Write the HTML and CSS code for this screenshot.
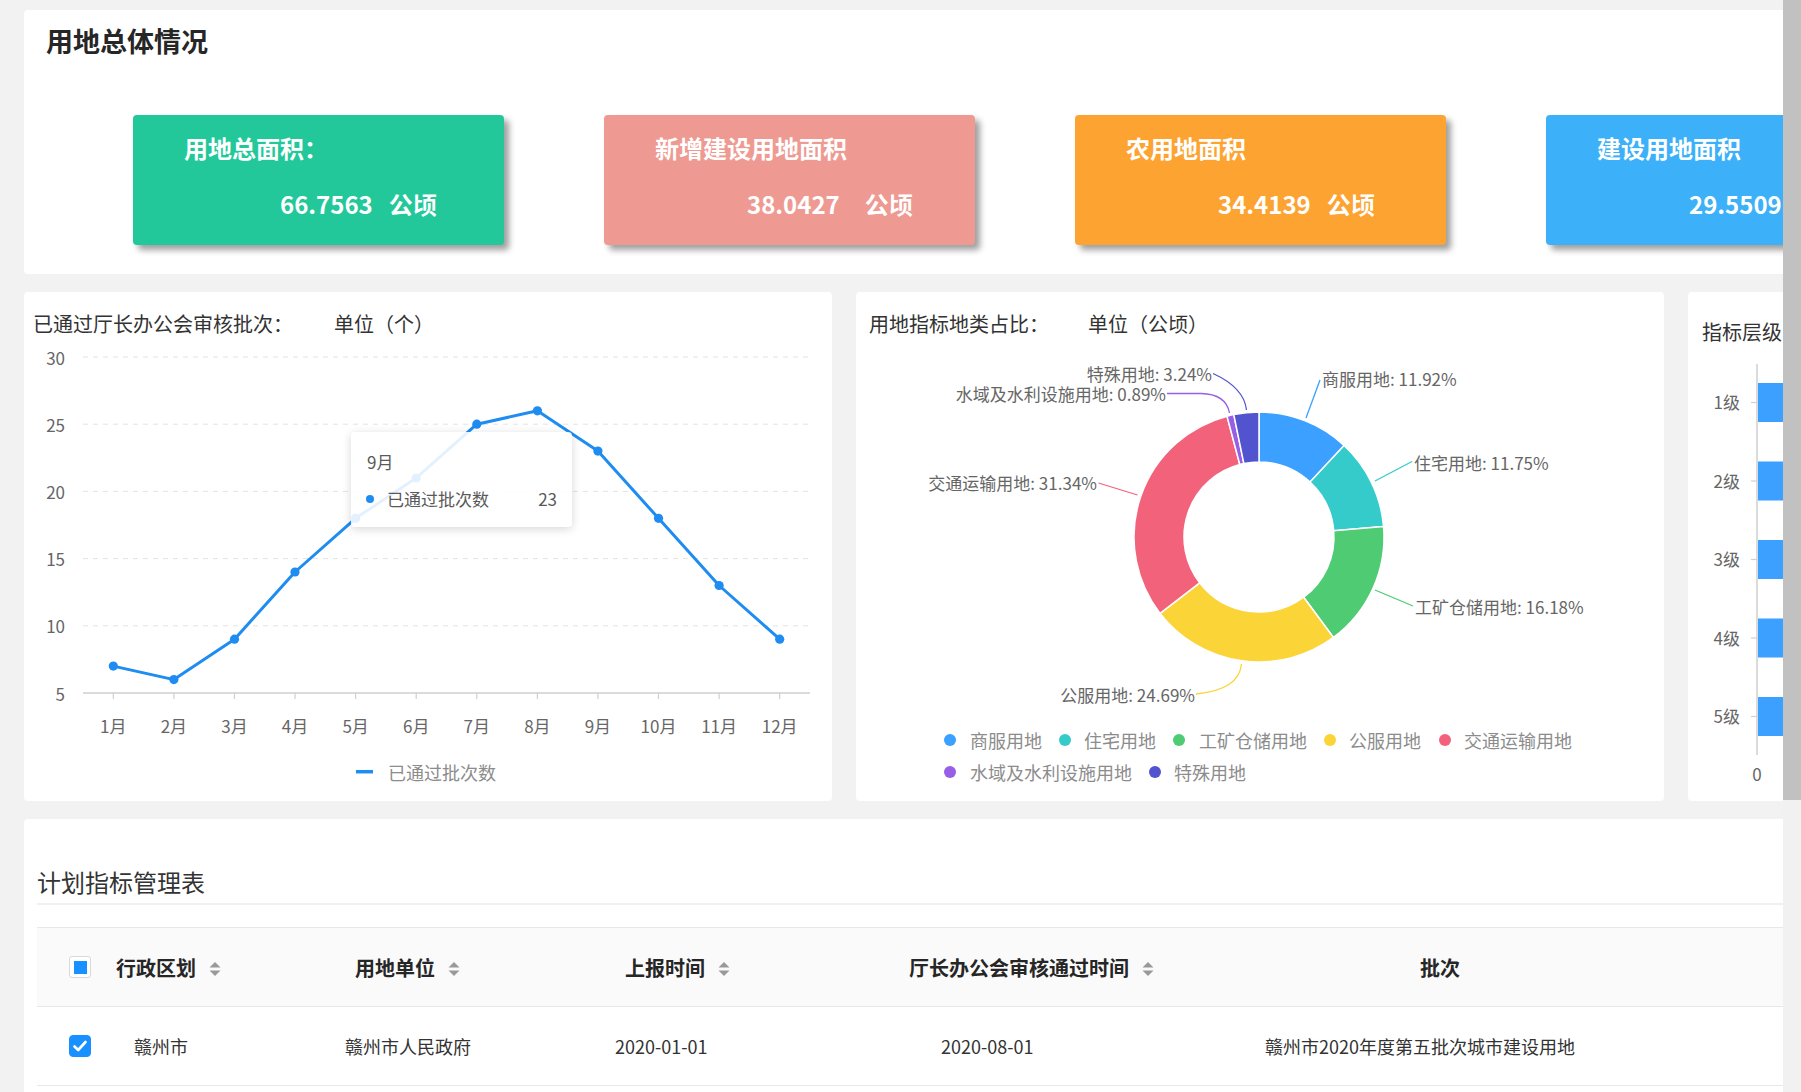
FILE: index.html
```html
<!DOCTYPE html>
<html lang="zh-CN">
<head>
<meta charset="utf-8">
<title>用地总体情况</title>
<link rel="stylesheet" href="styles.css">
</head>
<body>
<div class="app">
  <div class="main">
    <section class="overview">
      <h1 class="overview-title">用地总体情况</h1>
      <div class="cards">
        <div class="card card-green">
          <div class="card-title">用地总面积：</div>
          <div class="card-value value-first">66.7563<span class="unit">公顷</span></div>
        </div>
        <div class="card card-salmon">
          <div class="card-title">新增建设用地面积</div>
          <div class="card-value">38.0427<span class="unit unit-wide">公顷</span></div>
        </div>
        <div class="card card-orange">
          <div class="card-title">农用地面积</div>
          <div class="card-value">34.4139<span class="unit">公顷</span></div>
        </div>
        <div class="card card-blue">
          <div class="card-title">建设用地面积</div>
          <div class="card-value">29.5509<span class="unit">公顷</span></div>
        </div>
      </div>
    </section>

    <div class="charts">
      <section class="panel panel-line">
        <div class="panel-title"><span class="title-main">已通过厅长办公会审核批次：</span><span class="unit-label">单位（个）</span></div>
        <svg class="chart" width="808" height="463" viewBox="0 0 808 463">
          <g class="grid">
            <line x1="59" y1="19" x2="786" y2="19"/>
            <line x1="59" y1="86.2" x2="786" y2="86.2"/>
            <line x1="59" y1="153.4" x2="786" y2="153.4"/>
            <line x1="59" y1="220.6" x2="786" y2="220.6"/>
            <line x1="59" y1="287.8" x2="786" y2="287.8"/>
          </g>
          <line class="axis" x1="59" y1="355" x2="786" y2="355"/>
          <g class="ticks">
            <line x1="89.3" y1="355" x2="89.3" y2="361"/>
            <line x1="149.9" y1="355" x2="149.9" y2="361"/>
            <line x1="210.5" y1="355" x2="210.5" y2="361"/>
            <line x1="271" y1="355" x2="271" y2="361"/>
            <line x1="331.6" y1="355" x2="331.6" y2="361"/>
            <line x1="392.2" y1="355" x2="392.2" y2="361"/>
            <line x1="452.8" y1="355" x2="452.8" y2="361"/>
            <line x1="513.4" y1="355" x2="513.4" y2="361"/>
            <line x1="573.9" y1="355" x2="573.9" y2="361"/>
            <line x1="634.5" y1="355" x2="634.5" y2="361"/>
            <line x1="695.1" y1="355" x2="695.1" y2="361"/>
            <line x1="755.7" y1="355" x2="755.7" y2="361"/>
          </g>
          <g class="ylabels">
            <text x="41" y="19">30</text>
            <text x="41" y="86.2">25</text>
            <text x="41" y="153.4">20</text>
            <text x="41" y="220.6">15</text>
            <text x="41" y="287.8">10</text>
            <text x="41" y="355">5</text>
          </g>
          <g class="xlabels">
            <text x="89.3" y="387">1月</text>
            <text x="149.9" y="387">2月</text>
            <text x="210.5" y="387">3月</text>
            <text x="271" y="387">4月</text>
            <text x="331.6" y="387">5月</text>
            <text x="392.2" y="387">6月</text>
            <text x="452.8" y="387">7月</text>
            <text x="513.4" y="387">8月</text>
            <text x="573.9" y="387">9月</text>
            <text x="634.5" y="387">10月</text>
            <text x="695.1" y="387">11月</text>
            <text x="755.7" y="387">12月</text>
          </g>
          <polyline class="series" points="89.3,328.1 149.9,341.6 210.5,301.2 271,234 331.6,180.3 392.2,140 452.8,86.2 513.4,72.8 573.9,113.1 634.5,180.3 695.1,247.5 755.7,301.2"/>
          <g class="dots">
            <circle cx="89.3" cy="328.1" r="4.6"/>
            <circle cx="149.9" cy="341.6" r="4.6"/>
            <circle cx="210.5" cy="301.2" r="4.6"/>
            <circle cx="271" cy="234" r="4.6"/>
            <circle cx="331.6" cy="180.3" r="4.6"/>
            <circle cx="392.2" cy="140" r="4.6"/>
            <circle cx="452.8" cy="86.2" r="4.6"/>
            <circle cx="513.4" cy="72.8" r="4.6"/>
            <circle cx="573.9" cy="113.1" r="4.6"/>
            <circle cx="634.5" cy="180.3" r="4.6"/>
            <circle cx="695.1" cy="247.5" r="4.6"/>
            <circle cx="755.7" cy="301.2" r="4.6"/>
          </g>
          <line class="legend-line" x1="332" y1="433.7" x2="349" y2="433.7"/>
          <text class="legend-text" x="364" y="434">已通过批次数</text>
        </svg>
        <div class="tooltip">
          <div class="tooltip-head">9月</div>
          <div class="tooltip-row"><span class="tooltip-dot"></span><span class="tooltip-name">已通过批次数</span><span class="tooltip-val">23</span></div>
        </div>
      </section>

      <section class="panel panel-pie">
        <div class="panel-title"><span class="title-main">用地指标地类占比：</span><span class="unit-label">单位（公顷）</span></div>
        <svg class="chart" width="806" height="463" viewBox="0 0 806 463">
          <g class="slices">
            <path fill="#3ba0ff" d="M403,74 A125,125 0 0 1 488.10,107.44 L454.06,144.06 A75,75 0 0 0 403,124 Z"/>
            <path fill="#36cbcb" d="M488.10,107.44 A125,125 0 0 1 527.56,188.57 L477.74,192.74 A75,75 0 0 0 454.06,144.06 Z"/>
            <path fill="#4ecb73" d="M527.56,188.57 A125,125 0 0 1 477.43,299.43 L447.66,259.26 A75,75 0 0 0 477.74,192.74 Z"/>
            <path fill="#fbd437" d="M477.43,299.43 A125,125 0 0 1 304.05,275.38 L343.63,244.83 A75,75 0 0 0 447.66,259.26 Z"/>
            <path fill="#f2637b" d="M304.05,275.38 A125,125 0 0 1 371.0,78.16 L383.8,126.5 A75,75 0 0 0 343.63,244.83 Z"/>
            <path fill="#975fe5" d="M371.0,78.16 A125,125 0 0 1 377.8,76.56 L387.88,125.54 A75,75 0 0 0 383.8,126.5 Z"/>
            <path fill="#5254cf" d="M377.8,76.56 A125,125 0 0 1 403,74 L403,124 A75,75 0 0 0 387.88,125.54 Z"/>
          </g>
          <g class="leaders">
            <path stroke="#3ba0ff" d="M450,80 L464,42"/>
            <path stroke="#36cbcb" d="M519,143 L556,123.5"/>
            <path stroke="#4ecb73" d="M519,252 L557,268"/>
            <path stroke="#fbd437" d="M385.5,326 Q383,352 340,356"/>
            <path stroke="#f2637b" d="M281.5,157 L242.5,145"/>
            <path stroke="#975fe5" d="M373.5,75 Q370,56 345,55.5 L311,55.5"/>
            <path stroke="#5254cf" d="M390.5,72 C389,58 380,46 357,35.5"/>
          </g>
          <g class="pie-labels">
            <text x="466" y="40">商服用地: 11.92%</text>
            <text x="558" y="124">住宅用地: 11.75%</text>
            <text x="559" y="268">工矿仓储用地: 16.18%</text>
            <text class="end" x="339" y="356">公服用地: 24.69%</text>
            <text class="end" x="241" y="144.7">交通运输用地: 31.34%</text>
            <text class="end" x="310" y="55.4">水域及水利设施用地: 0.89%</text>
            <text class="end" x="356" y="35.4">特殊用地: 3.24%</text>
          </g>
          <g class="pie-legend">
            <circle cx="94" cy="402" r="6" fill="#3ba0ff"/><text x="114" y="402">商服用地</text>
            <circle cx="209" cy="402" r="6" fill="#36cbcb"/><text x="228" y="402">住宅用地</text>
            <circle cx="323" cy="402" r="6" fill="#4ecb73"/><text x="343" y="402">工矿仓储用地</text>
            <circle cx="474" cy="402" r="6" fill="#fbd437"/><text x="493" y="402">公服用地</text>
            <circle cx="589" cy="402" r="6" fill="#f2637b"/><text x="608" y="402">交通运输用地</text>
            <circle cx="94" cy="434" r="6" fill="#975fe5"/><text x="114" y="434">水域及水利设施用地</text>
            <circle cx="299" cy="434" r="6" fill="#5254cf"/><text x="318" y="434">特殊用地</text>
          </g>
        </svg>
      </section>

      <section class="panel panel-bar">
        <div class="panel-title">指标层级</div>
        <svg class="chart" width="808" height="454" viewBox="0 0 808 454">
          <g class="bars">
            <rect x="70" y="36" width="420" height="39"/>
            <rect x="70" y="114.5" width="360" height="39"/>
            <rect x="70" y="193" width="300" height="39"/>
            <rect x="70" y="271.5" width="240" height="39"/>
            <rect x="70" y="350" width="180" height="39"/>
          </g>
          <line class="axis" x1="69" y1="17" x2="69" y2="408"/>
          <g class="ticks">
            <line x1="63" y1="55.5" x2="69" y2="55.5"/>
            <line x1="63" y1="134" x2="69" y2="134"/>
            <line x1="63" y1="212.5" x2="69" y2="212.5"/>
            <line x1="63" y1="291" x2="69" y2="291"/>
            <line x1="63" y1="369.5" x2="69" y2="369.5"/>
          </g>
          <g class="ylabels">
            <text x="52" y="54.5">1级</text>
            <text x="52" y="133">2级</text>
            <text x="52" y="211.5">3级</text>
            <text x="52" y="290">4级</text>
            <text x="52" y="368.5">5级</text>
          </g>
          <text class="zero" x="69" y="426">0</text>
        </svg>
      </section>
    </div>

    <section class="table-panel">
      <h2 class="table-title">计划指标管理表</h2>
      <div class="table">
        <div class="trow thead">
          <div class="cell"><span class="cb cb-indeterminate"></span></div>
          <div class="cell">行政区划<svg class="sorter" width="12" height="16" viewBox="0 0 12 16"><path d="M0.5 6.5 L6 1 L11.5 6.5 Z"/><path d="M0.5 9.5 L6 15 L11.5 9.5 Z"/></svg></div>
          <div class="cell">用地单位<svg class="sorter" width="12" height="16" viewBox="0 0 12 16"><path d="M0.5 6.5 L6 1 L11.5 6.5 Z"/><path d="M0.5 9.5 L6 15 L11.5 9.5 Z"/></svg></div>
          <div class="cell">上报时间<svg class="sorter" width="12" height="16" viewBox="0 0 12 16"><path d="M0.5 6.5 L6 1 L11.5 6.5 Z"/><path d="M0.5 9.5 L6 15 L11.5 9.5 Z"/></svg></div>
          <div class="cell">厅长办公会审核通过时间<svg class="sorter" width="12" height="16" viewBox="0 0 12 16"><path d="M0.5 6.5 L6 1 L11.5 6.5 Z"/><path d="M0.5 9.5 L6 15 L11.5 9.5 Z"/></svg></div>
          <div class="cell">批次</div>
        </div>
        <div class="trow tbody">
          <div class="cell"><span class="cb cb-checked"><svg width="14" height="12" viewBox="0 0 14 12"><path d="M1.5 6.5 L5.2 10 L12.5 2" fill="none" stroke="#fff" stroke-width="2.6" stroke-linecap="round" stroke-linejoin="round"/></svg></span></div>
          <div class="cell">赣州市</div>
          <div class="cell">赣州市人民政府</div>
          <div class="cell">2020-01-01</div>
          <div class="cell">2020-08-01</div>
          <div class="cell">赣州市2020年度第五批次城市建设用地</div>
        </div>
      </div>
    </section>
  </div>
  <div class="scrollbar"><div class="scrollbar-thumb"></div></div>
</div>
</body>
</html>
```

FILE: styles.css
```css
* {
  box-sizing: border-box;
  margin: 0;
  padding: 0;
}

html,
body {
  width: 1801px;
  height: 1092px;
  overflow: hidden;
}

body {
  font-family: "Noto Sans CJK SC", "Microsoft YaHei", sans-serif;
  background: #f2f2f2;
  color: #333;
}

.app {
  display: flex;
  height: 1092px;
}

.main {
  width: 1783px;
  flex: none;
  overflow: hidden;
  padding: 10px 0 0 24px;
}

.scrollbar {
  width: 18px;
  flex: none;
  background: #f1f1f1;
}

.scrollbar-thumb {
  height: 800px;
  background: #c1c1c1;
}

/* ---------- overview ---------- */
.overview {
  width: 2400px;
  height: 264px;
  background: #fff;
  border-radius: 4px;
}

.overview-title {
  font-size: 27px;
  font-weight: 700;
  line-height: 36px;
  padding: 13px 0 0 22px;
  color: #262626;
}

.cards {
  display: flex;
  gap: 100px;
  padding-left: 109px;
  margin-top: 56px;
}

.card {
  width: 371px;
  height: 130px;
  flex: none;
  border-radius: 4px;
  box-shadow: 5px 5px 6px rgba(0, 0, 0, 0.38);
  color: #fff;
  font-weight: 700;
  padding-top: 19px;
}

.card-green { background: #22c79a; }
.card-salmon { background: #ee9a92; }
.card-orange { background: #fda332; }
.card-blue { background: #3cb0f8; }

.card-title {
  font-size: 24px;
  line-height: 28px;
  padding-left: 51px;
}

.card-value {
  font-size: 24px;
  line-height: 32px;
  margin-top: 26px;
  padding-left: 143px;
  white-space: nowrap;
}

.value-first {
  padding-left: 147px;
}

.unit {
  margin-left: 16px;
}

.unit-wide {
  margin-left: 25px;
}

/* ---------- charts row ---------- */
.charts {
  display: flex;
  gap: 24px;
  margin-top: 18px;
}

.panel {
  position: relative;
  width: 808px;
  height: 509px;
  flex: none;
  background: #fff;
  border-radius: 4px;
}

.panel-title {
  display: flex;
  height: 46px;
  font-size: 20px;
  line-height: 28px;
  padding-top: 18px;
  color: #333;
  white-space: nowrap;
}

.panel-line .panel-title { padding-left: 9px; }
.panel-line .unit-label { margin-left: 41px; }

.panel-pie .panel-title { padding-left: 13px; }
.panel-pie .unit-label { margin-left: 39px; }

.panel-bar .panel-title {
  height: 55px;
  padding: 26px 0 0 14px;
}

.chart {
  display: block;
  font-family: "Noto Sans CJK SC", "Microsoft YaHei", sans-serif;
}

.chart text {
  dominant-baseline: central;
}

.grid line {
  stroke: #e3e3e3;
  stroke-width: 1;
  stroke-dasharray: 5 5;
}

.axis {
  stroke: #cfcfcf;
  stroke-width: 1.5;
}

.ticks line {
  stroke: #cfcfcf;
  stroke-width: 1.2;
}

.ylabels text {
  font-size: 17px;
  fill: #666;
  text-anchor: end;
}

.xlabels text {
  font-size: 17px;
  fill: #666;
  text-anchor: middle;
}

.series {
  fill: none;
  stroke: #1e8cf0;
  stroke-width: 3;
  stroke-linejoin: round;
}

.dots circle {
  fill: #1e8cf0;
}

.legend-line {
  stroke: #1e8cf0;
  stroke-width: 3.5;
}

.legend-text {
  font-size: 18px;
  fill: #8c8c8c;
}

/* tooltip over the line chart */
.tooltip {
  position: absolute;
  left: 327px;
  top: 140px;
  width: 221px;
  height: 95px;
  background: rgba(255, 255, 255, 0.88);
  border-radius: 4px;
  box-shadow: 0 2px 10px rgba(0, 0, 0, 0.16);
  padding: 18px 15px 0 16px;
  font-size: 17px;
  line-height: 24px;
  color: #595959;
}

.tooltip-row {
  display: flex;
  align-items: center;
  margin-top: 13px;
  margin-left: -1px;
}

.tooltip-dot {
  width: 8px;
  height: 8px;
  border-radius: 50%;
  background: #1e8cf0;
  margin-right: 13px;
}

.tooltip-name {
  flex: 1;
}

/* pie */
.slices path {
  stroke: #fff;
  stroke-width: 1.5;
  stroke-linejoin: round;
}

.leaders path {
  fill: none;
  stroke-width: 1.3;
}

.pie-labels text {
  font-size: 17px;
  fill: #666;
}

.pie-labels text.end {
  text-anchor: end;
}

.pie-legend text {
  font-size: 18px;
  fill: #8c8c8c;
}

/* bar */
.bars rect {
  fill: #3ba0ff;
}

.zero {
  font-size: 17px;
  fill: #666;
  text-anchor: middle;
}

/* ---------- table ---------- */
.table-panel {
  width: 2400px;
  height: 400px;
  margin-top: 18px;
  background: #fff;
  border-radius: 4px;
  padding-left: 13px;
}

.table-title {
  font-size: 24px;
  font-weight: 400;
  line-height: 32px;
  padding: 47px 0 5px 0;
  color: #333;
  border-bottom: 2px solid #f0f0f0;
}

.table {
  margin-top: 22px;
  border-top: 1px solid #e8e8e8;
}

.trow {
  display: grid;
  grid-template-columns: 63px 200px 260px 290px 380px 900px;
  align-items: center;
  border-bottom: 1px solid #e8e8e8;
}

.thead {
  height: 79px;
  background: #fafafa;
  font-size: 20px;
  font-weight: 700;
  color: #262626;
}

.tbody {
  height: 79px;
  font-size: 18px;
  color: #333;
}

.cell {
  display: flex;
  align-items: center;
  white-space: nowrap;
}

.trow .cell:nth-child(1) { padding-left: 32px; }

.thead .cell:nth-child(2) { padding-left: 16px; }
.thead .cell:nth-child(3) { padding-left: 55px; }
.thead .cell:nth-child(4) { padding-left: 65px; }
.thead .cell:nth-child(5) { padding-left: 59px; }
.thead .cell:nth-child(6) { padding-left: 190px; }

.tbody .cell:nth-child(2) { padding-left: 34px; }
.tbody .cell:nth-child(3) { padding-left: 45px; }
.tbody .cell:nth-child(4) { padding-left: 55px; }
.tbody .cell:nth-child(5) { padding-left: 91px; }
.tbody .cell:nth-child(6) { padding-left: 35px; }

.sorter {
  margin-left: 13px;
  margin-top: 4px;
}

.sorter path {
  fill: #999;
}

.cb {
  width: 22px;
  height: 22px;
  border: 1px solid #d9d9d9;
  border-radius: 3px;
  background: #fff;
  display: flex;
  align-items: center;
  justify-content: center;
}

.cb-indeterminate::after {
  content: "";
  width: 13px;
  height: 13px;
  background: #1890ff;
}

.cb-checked {
  background: #1890ff;
  border-color: #1890ff;
  border-radius: 4px;
}
```
